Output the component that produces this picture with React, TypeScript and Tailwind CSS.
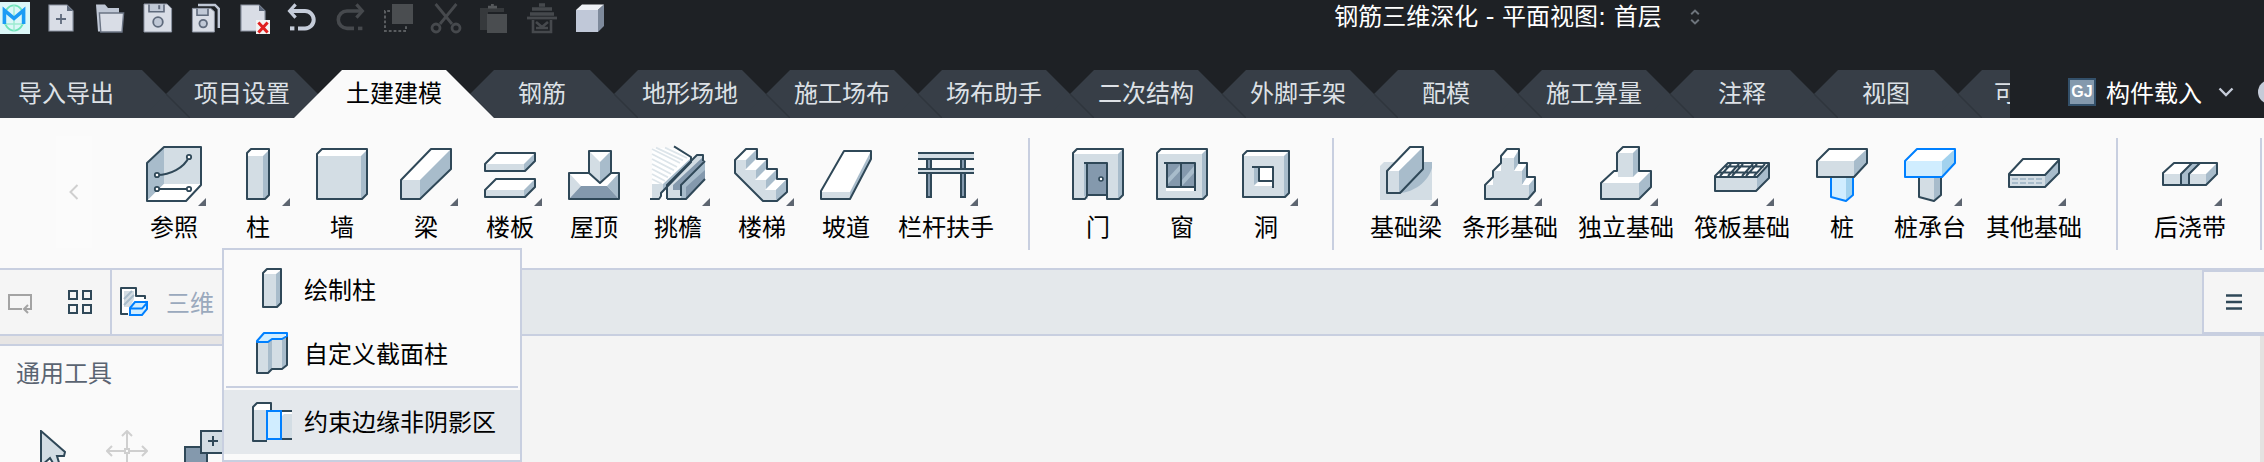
import type { ReactNode } from "react";

const DARK = "#2f4858";
const LIGHT = "#d3dde4";
const MID = "#a8bccb";
const DEEP = "#8499ad";
const BLUE = "#0080ff";
const SKY = "#d0edff";
const SKY_SIDE = "#a2d2ee";

type FaceProps = { d: string; fill: string };
const Face = ({ d, fill }: FaceProps) => <path d={d} fill={fill} />;

const Edge = ({ d, color = DARK }: { d: string; color?: string }) => (
  <path d={d} fill="none" stroke={color} strokeWidth="1" strokeLinejoin="round" />
);

/* ---------- Quick access icons (16 × 16 grid) ---------- */

const DocBase = () => (
  <>
    <path d="M1.5 1.5H10.5L13.5 4.5V14.5H1.5Z" fill="#d9dde6" stroke="#8b93a2" strokeWidth=".6" />
    <path d="M10.5 1.5L13.5 4.5H10.5Z" fill="#5f6a7c" />
  </>
);

const FloppyBase = () => (
  <>
    <path d="M1 1H12.5L14.8 3.2V15H1Z" fill="#d9dde6" stroke="#8b93a2" strokeWidth=".5" />
    <path d="M3.5 1.2V4.9H11V1.2" fill="#c0c8d6" stroke="#5f6a7c" strokeWidth=".8" />
    <path d="M8.6 1.6V3.6" stroke="#5f6a7c" />
    <circle cx="8" cy="10" r="2.4" fill="#c0c8d6" stroke="#5f6a7c" strokeWidth=".9" />
  </>
);

const quickIcons: { label: string; art: ReactNode }[] = [
  {
    label: "新建",
    art: (
      <>
        <DocBase />
        <path d="M7.5 6V11M5 8.5H10" stroke="#5f6a7c" strokeWidth=".9" fill="none" />
      </>
    ),
  },
  {
    label: "打开",
    art: (
      <>
        <path d="M1 1.2H5.5L7 3H12.5V5.5H3.5L3 14.8H2Z" fill="#bfc7d5" />
        <path d="M2.7 5.5H14.8L14 15H3.4Z" fill="#d9dde6" stroke="#6b7484" strokeWidth=".7" />
      </>
    ),
  },
  { label: "保存", art: <FloppyBase /> },
  {
    label: "全部保存",
    art: (
      <>
        <path d="M4 1.5H12.5L14.4 3.4V13" fill="none" stroke="#bfc7d5" strokeWidth="1.2" />
        <path d="M1.2 3.2H10.4L12.2 4.8V15H1.2Z" fill="#d9dde6" stroke="#8b93a2" strokeWidth=".5" />
        <path d="M3.5 3.4V6.6H9V3.4" fill="#c0c8d6" stroke="#5f6a7c" strokeWidth=".8" />
        <circle cx="6.6" cy="10.8" r="1.9" fill="#c0c8d6" stroke="#5f6a7c" strokeWidth=".9" />
      </>
    ),
  },
  {
    label: "关闭文档",
    art: (
      <>
        <DocBase />
        <rect x="9" y="9" width="7" height="7" fill="#f3f3f3" />
        <path d="M10.2 10.2L14.8 15.2M14.8 10.2L10.2 15.2" stroke="#e02020" strokeWidth="1.5" />
      </>
    ),
  },
  {
    label: "撤销",
    art: (
      <>
        <path d="M2.5 4.5H9.5A4.3 4.3 0 0 1 9.5 13.2H6" fill="none" stroke="#c5ccd9" strokeWidth="2" />
        <path d="M4.8 1.2L1.8 4.5L4.8 7.8" fill="none" stroke="#c5ccd9" strokeWidth="1.6" />
        <path d="M2 13.2H4.2" stroke="#c5ccd9" strokeWidth="2" />
      </>
    ),
  },
  {
    label: "重做",
    art: (
      <>
        <path d="M13.5 4.5H6.5A4.3 4.3 0 0 0 6.5 13.2H10" fill="none" stroke="#46494d" strokeWidth="1.8" />
        <path d="M11.2 1.2L14.2 4.5L11.2 7.8" fill="none" stroke="#46494d" strokeWidth="1.6" />
        <path d="M12 13.2H14.2" stroke="#46494d" strokeWidth="1.8" />
      </>
    ),
  },
  {
    label: "选择",
    art: (
      <>
        <rect x="5" y="1" width="10.5" height="10" fill="#4a4d50" />
        <path d="M4 4.5H1.5V14.5H12V12" fill="none" stroke="#5a5d60" strokeDasharray="1.4 1" />
      </>
    ),
  },
  {
    label: "剪切",
    art: (
      <g fill="none" stroke="#46494d" strokeWidth="1.4">
        <path d="M2.8 1L11 11M13.2 1L5 11" />
        <circle cx="3" cy="13" r="2" />
        <circle cx="13" cy="13" r="2" />
      </g>
    ),
  },
  {
    label: "粘贴",
    art: (
      <>
        <path d="M1 3H13V5H5V14H1Z" fill="#36393c" />
        <path d="M5 2.6H9.5M7.2 1V3" stroke="#55585b" strokeWidth="1.4" />
        <rect x="4.5" y="6" width="10" height="9.5" fill="#4a4d50" />
      </>
    ),
  },
  {
    label: "匹配",
    art: (
      <g fill="none" stroke="#46494d">
        <path d="M3 3.5H13M2 6H14M6.5 1.5H9.5" strokeWidth="1.8" />
        <path d="M0.5 8H15.5" strokeWidth="1.4" />
        <path d="M3.5 9V15H12.5V9M5 10L8 12.5L11 10M5 13H11" strokeWidth="1.3" />
      </g>
    ),
  },
  {
    label: "三维",
    art: (
      <>
        <path d="M1 4L4 1.2H15L12 4Z" fill="#eef1f6" />
        <path d="M12 4L15 1.2V12L12 15Z" fill="#7e8a9c" />
        <path d="M1 4H12V15H1Z" fill="#c0c8d8" />
      </>
    ),
  },
];

/* ---------- Ribbon icons (32 × 32 grid) ---------- */

const refIcon = (
  <>
    <Face d="M2.5 10.5L11 2.5V21L2.5 29.5Z" fill={MID} />
    <Face d="M11 2.5H29.5V21H11Z" fill={LIGHT} />
    <Face d="M11 21H29.5L22 29.5H2.5Z" fill="#fff" />
    <Edge d="M2.5 10.5L11 2.5H29.5V21.5L22 29.5H2.5Z" />
    <Edge d="M7.5 16.5C14 16.5 21 13 23.5 7.5M7.5 23.5H23.5" />
    {[[7.5, 16.5], [23.5, 7.5], [7.5, 23.5], [23.5, 23.5]].map(([x, y]) => (
      <circle key={`${x}-${y}`} cx={x} cy={y} r="1.1" fill="#fff" stroke={DARK} strokeWidth=".9" />
    ))}
  </>
);

const columnIcon = (
  <>
    <Face d="M10.5 5.5L12.5 3.5H21.5L19 7H10.5Z" fill="#fff" />
    <Face d="M10.5 7H18.5V28.5H10.5Z" fill={LIGHT} />
    <Face d="M18.5 7L21.5 4V26.5L18.5 28.5Z" fill={MID} />
    <Edge d="M10.5 5.5L12.5 3.5H21.5V26.5L19.5 28.5H10.5Z" />
  </>
);

const wallIcon = (
  <>
    <Face d="M3.5 6L6 3.5H28.5L25.5 7H3.5Z" fill="#fff" />
    <Face d="M3.5 7H25.5V28.5H3.5Z" fill={LIGHT} />
    <Face d="M25.5 7L28.5 4V26L25.5 28.5Z" fill={MID} />
    <Edge d="M3.5 6L6 3.5H28.5V26L26 28.5H3.5Z" />
  </>
);

const beamIcon = (
  <>
    <Face d="M3.5 19L18.5 3.5H28.5L13 19Z" fill="#fff" />
    <Face d="M3.5 19H13V28.5H3.5Z" fill={LIGHT} />
    <Face d="M13 19L28.5 3.5V13.5L13 28.5Z" fill={MID} />
    <Edge d="M3.5 19L18.5 3.5H28.5V13.5L13 28.5H3.5Z" />
  </>
);

const Slab = () => (
  <>
    <Face d="M3.5 11L9 5.5H28.5L23 11Z" fill="#fff" />
    <Face d="M3.5 11H23V14.5H3.5Z" fill={LIGHT} />
    <Face d="M23 11L28.5 5.5V9.5L23 14.5Z" fill={MID} />
    <Edge d="M3.5 11L9 5.5H28.5V9.5L23.5 14.5H3.5Z" />
  </>
);

const slabIcon = (
  <>
    <Slab />
    <g transform="translate(0 13)">
      <Slab />
    </g>
  </>
);

const roofIcon = (
  <>
    <Face d="M3.5 15.5H28.5L23 22H9Z" fill="#fff" />
    <Face d="M3.5 15.5L9.5 22L3.5 28.5Z" fill={LIGHT} />
    <Face d="M28.5 15.5L22.5 22L28.5 28.5Z" fill={MID} />
    <Face d="M9.5 22H22.5L28.5 28.5H3.5Z" fill={DEEP} />
    <Face d="M13.5 4.5H24.5L19 10Z" fill="#fff" />
    <Face d="M13.5 4.5L19 10V20.5L13.5 15.5Z" fill={LIGHT} />
    <Face d="M24.5 4.5L19 10V20.5L24.5 15.5Z" fill={MID} />
    <Edge d="M13.5 15.5H3.5V28.5H28.5V15.5H24.5M13.5 4.5H24.5V15.5L19 20.5L13.5 15.5Z" />
  </>
);

const eavesIcon = (
  <>
    <Face d="M3 3H15L22.5 8V10L9 23V28H3Z" fill="#fff" />
    <path
      d="M3 3.5L17 10.5M3 6L15.5 12.5M3 8.5L14 14.2M3 11L12.5 16M3 13.5L11 17.7M3 16L9.5 19.5M3 18.5L8 21M5 2.8L18.5 9.2M9.5 2.8L20.5 8"
      stroke="#dde5ea"
      strokeWidth=".9"
      fill="none"
    />
    <Face d="M3 21H8.5V25L6 28H3Z" fill={LIGHT} />
    <Face d="M8.5 21L22.5 8V10.5L8.5 25Z" fill={MID} />
    <Face d="M10.5 21.5L25.5 7H28.5V11L17.5 22V28H10.5Z" fill={LIGHT} />
    <Face d="M13.5 21.5L28.5 7.5V10L17.5 21V24H13.5Z" fill={DEEP} />
    <Face d="M17.5 21.5L29.5 9.5V18.5L20 28H17.5Z" fill={MID} />
    <Face d="M20 22.5L29.5 14V18.5L20 28Z" fill={DEEP} />
    <Edge d="M14 2.2L22.5 7.5V10L7.5 25.5V27L6.5 28.5H2" />
    <Edge d="M10.5 28.5V21.5L25.5 6.5H28.5V9.5" />
    <Edge d="M29.5 9.5L17.5 21.5V27M10.5 28.5H20L29.5 18.5" />
  </>
);

const stairsIcon = (
  <>
    <Face d="M2.5 9H8L8 14H13V19H18V24H23.5V29.5H16.5L2.5 15.5Z" fill={LIGHT} />
    {[0, 5, 10, 15].map((k) => (
      <g key={k} transform={`translate(${k} ${k})`}>
        <Face d="M2.5 9L8 3.5H13.5L8 9Z" fill="#fff" />
        <Face d="M8 9L13.5 3.5V8.5L8 14Z" fill={MID} />
      </g>
    ))}
    <Face d="M23 24L28.5 18.5V25L23.5 29.5Z" fill={MID} />
    <Edge d="M2.5 9L8 3.5H13.5V8.5H18.5V13.5H23.5V18.5H28.5V25L23.5 29.5H16.5L2.5 15.5Z" />
  </>
);

const rampIcon = (
  <>
    <Face d="M3.5 25L15 4.5H28.5L18 25Z" fill="#fff" />
    <Face d="M3.5 25H18V28.5H3.5Z" fill={LIGHT} />
    <Face d="M18 25L28.5 4.5V8.5L18 28.5Z" fill={MID} />
    <Edge d="M3.5 24.5L15 4.5H28.5V8.5L18 28.5H3.5Z" />
  </>
);

const railingIcon = (
  <>
    <rect x="2" y="5" width="28" height="4" fill={LIGHT} />
    <rect x="6.5" y="8.5" width="2" height="19" fill={DEEP} stroke={DARK} />
    <rect x="23.5" y="8.5" width="2" height="19" fill={DEEP} stroke={DARK} />
    <rect x="2" y="13" width="28" height="3" fill={LIGHT} />
    <Edge d="M2 5.5H30M2 8.5H30M2 13.5H30M2 15.5H30" />
  </>
);

const doorIcon = (
  <>
    <Face d="M3.5 5.5L5.5 3.5H28.5L26 6H3.5Z" fill="#fff" />
    <Face d="M3.5 6H26V28.5H3.5Z" fill={LIGHT} />
    <Face d="M26 6L28.5 3.5V26.5L26 28.5Z" fill={MID} />
    <rect x="11" y="27" width="9" height="2.2" fill="#fafafa" />
    <rect x="9" y="11" width="1.5" height="16" fill={MID} />
    <rect x="10.5" y="10.5" width="10" height="16" fill={DEEP} />
    <Edge d="M9 10.5H20.5V28.5H26.5L28.5 26.5V3.5H5.5L3.5 5.5V28.5H9.5L10.5 27V10.5M10.5 26.5H20.5" />
    <circle cx="17.5" cy="18.5" r="1" fill="#fff" stroke={DARK} strokeWidth=".8" />
  </>
);

const windowIcon = (
  <>
    <Face d="M3.5 5.5L5.5 3.5H28.5L26 6H3.5Z" fill="#fff" />
    <Face d="M3.5 6H26V28.5H3.5Z" fill={LIGHT} />
    <Face d="M26 6L28.5 3.5V26.5L26 28.5Z" fill={MID} />
    <Edge d="M3.5 5.5L5.5 3.5H28.5V26.5L26.5 28.5H3.5Z" />
    <rect x="8" y="23" width="15" height="1.5" fill="#fff" />
    <rect x="8.5" y="10.5" width="14" height="12" fill={DEEP} />
    <Face d="M9 18L15 11.5V14.5L9 21Z" fill={MID} />
    <Face d="M16 19L22 12V15.5L16 22Z" fill={MID} />
    <Edge d="M7 10.5H22.5V24.5M8.5 10.5V22.5H22.5M15.5 10.5V22.5" />
  </>
);

const holeIcon = (
  <>
    <Face d="M4.5 6.5L6.5 4.5H27.5L25 7H4.5Z" fill="#fff" />
    <Face d="M4.5 7H25V27.5H4.5Z" fill={LIGHT} />
    <Face d="M25 7L27.5 4.5V25.5L25 27.5Z" fill={MID} />
    <Edge d="M4.5 6.5L6.5 4.5H27.5V25.5L25.5 27.5H4.5Z" />
    <Face d="M10 12.5H12.5V19.5L10 21.5Z" fill={MID} />
    <Face d="M12.5 12.5H19.5V22H10L12.5 19.5Z" fill="#fff" />
    <Edge d="M9 12.5H19.5V23M12.5 12.5V19.5H19.5" />
  </>
);

const foundationBeamIcon = (
  <>
    <Face d="M3 12L5 10H29V29H3Z" fill={LIGHT} />
    <Face d="M24 10H29V13C27 20 20 25 13 25.5Z" fill={MID} />
    <Face d="M6.5 14.5L18 2.5H24.5L12.5 14.5Z" fill="#fff" />
    <Face d="M6.5 14.5H12.5V25.5H6.5Z" fill={LIGHT} />
    <Face d="M12.5 14.5L24.5 2.5V13.5L12.5 25.5Z" fill={MID} />
    <Edge d="M6.5 14.5L18 2.5H24.5V13.5L13 25.5H6.5Z" />
  </>
);

const stripIcon = (
  <>
    <Face
      d="M3.5 28.5V21.5L7.5 17.5V14.5L11.5 10.5V7L14.5 3.5H20.5V10.5H24.5V17.5H28.5V24.5L25 28.5Z"
      fill={LIGHT}
    />
    <Face d="M11.5 8L14.5 3.5H20.5L18 8Z" fill="#fff" />
    <Face d="M18 8L20.5 4V11L18 14.5Z" fill={MID} />
    <Face d="M7.5 14.5L11.5 10.5V14.5Z" fill="#fff" />
    <Face d="M18 14.5L20.5 10.5H24.5L22 14.5Z" fill="#fff" />
    <Face d="M22 14.5L24.5 11V18L22 21.5Z" fill={MID} />
    <Face d="M3.5 21.5L7.5 17.5V21.5Z" fill="#fff" />
    <Face d="M22 21.5L24.5 17.5H28.5L25.5 21.5Z" fill="#fff" />
    <Face d="M25.5 21.5L28.5 18V24.5L25.5 28.5Z" fill={MID} />
    <Edge d="M3.5 28.5V21.5L7.5 17.5V14.5L11.5 10.5V7L14.5 3.5H20.5V10.5H24.5V17.5H28.5V24.5L25 28.5Z" />
  </>
);

const isolatedIcon = (
  <>
    <Face d="M3.5 20.5L10 14.5H28.5L22.5 20.5Z" fill="#fff" />
    <Face d="M3.5 20.5H22.5V28.5H3.5Z" fill={LIGHT} />
    <Face d="M22.5 20.5L28.5 14.5V22.5L22.5 28.5Z" fill={MID} />
    <Face d="M11.5 5.5L14.5 2.5H22.5L19.5 5.5Z" fill="#fff" />
    <Face d="M11.5 5.5H19.5V17.5H12Z" fill={LIGHT} />
    <Face d="M19.5 5.5L22.5 2.5V14.5L19.5 17.5Z" fill={MID} />
    <Edge d="M3.5 20.5L10 14.5H11.5V5.5L14.5 2.5H22.5V14.5H28.5V22.5L22.5 28.5H3.5Z" />
  </>
);

const raftIcon = (
  <>
    <Face d="M2.5 17L9 10.5H29.5L23 17Z" fill="#fff" />
    <Face d="M2.5 17H23.5V24.5H2.5Z" fill={LIGHT} />
    <Face d="M23.5 17L29.5 11V18L23.5 24.5Z" fill={MID} />
    <Edge d="M2.5 17L9 10.5H29.5V18L23 24.5H2.5ZM2.5 17.5H23.5L29.5 11" />
    <Edge d="M7.5 12.3H27M4.5 15.3H24M9 17L14.5 11M11 17L16.5 11M16 17L21.5 11M18 17L23.5 11M5 17L10.5 11M22 17L27.5 11" />
  </>
);

const PileCap = ({ blue }: { blue: boolean }) => (
  <>
    <Face d="M3.5 9.5L9.5 3.5H28.5L22 9.5Z" fill="#fff" />
    <Face d="M3.5 9.5H22V17.5H3.5Z" fill={blue ? SKY : LIGHT} />
    <Face d="M22 9.5L28.5 3.5V10.5L22 17.5Z" fill={blue ? SKY_SIDE : MID} />
    <Edge d="M3.5 9.5L9.5 3.5H28.5V10.5L22 17.5H3.5Z" color={blue ? BLUE : DARK} />
  </>
);

const PileShaft = ({ blue }: { blue: boolean }) => (
  <>
    <Face d="M10.5 17.5H18V29.5L10.5 27.5Z" fill={blue ? SKY : LIGHT} />
    <Face d="M18 17.5H21.5V26.5L18 29.5Z" fill={blue ? SKY_SIDE : MID} />
    <Edge d="M10.5 17.5V27.5L18 29.5L21.5 26.5V17.5" color={blue ? BLUE : DARK} />
  </>
);

const pileIcon = (
  <>
    <PileShaft blue />
    <PileCap blue={false} />
  </>
);

const pileCapIcon = (
  <>
    <PileShaft blue={false} />
    <PileCap blue />
  </>
);

const otherIcon = (
  <>
    <Face d="M3.5 16.5L10.5 8.5H28.5L21.5 16.5Z" fill="#fff" />
    <Face d="M3.5 16.5H21.5V22.5H3.5Z" fill={LIGHT} />
    <Face d="M21.5 16.5L28.5 8.5V15.5L21.5 22.5Z" fill={MID} />
    <path d="M5 18.5H20M5 20.5H20" stroke={MID} strokeDasharray="3 1" fill="none" />
    <Edge d="M3.5 16L10.5 8.5H28.5V15.5L21.5 22.5H3.5ZM3.5 16.5H21.5L28.5 9" />
  </>
);

const postCastIcon = (
  <>
    <Face d="M2.5 16L8 10.5H29.5L24 16Z" fill="#fff" />
    <Face d="M2.5 16H24V21.5H2.5Z" fill={LIGHT} />
    <Face d="M24 16L29.5 10.5V16L24 21.5Z" fill={MID} />
    <Face d="M11.5 16L17 10.5H21L15.5 16V21.5H11.5Z" fill={MID} />
    <Edge d="M2.5 15.5L8 10.5H29.5V16L24 21.5H2.5Z" />
    <Edge d="M17 10.5L11.5 16V21.5M21 10.5L15.5 16V21.5" />
  </>
);

/* ---------- Drop-down menu icons (24 × 24 grid) ---------- */

const menuColumn = (
  <>
    <Face d="M7.5 3L9.5 1.5H16.5L14 4H7.5Z" fill="#fff" />
    <Face d="M7.5 4H14V20.5H7.5Z" fill={LIGHT} />
    <Face d="M14 4L16.5 2V18.5L14 20.5Z" fill={MID} />
    <Edge d="M7.5 3.5L9.5 1.5H16.5V18.5L14.5 20.5H7.5Z" />
  </>
);

const menuCustom = (
  <>
    <Face d="M4.5 6H10.5L12 4.5H19.5V18L17 19.5H12L10 21.5H4.5Z" fill={LIGHT} />
    <Face d="M10 6L12 4.5V19.5L10 21.5Z" fill={MID} />
    <Face d="M17 4.5L19.5 3V18L17 19.5Z" fill={MID} />
    <Edge d="M4.5 6V21.5H10L12 19.5H17L19.5 17.5V2" />
    <Face d="M4.5 5.5L8 1.5H19.5L17 4.5H12L10 6.5H4.5Z" fill={SKY} />
    <Edge d="M4.5 5.5L8 1.5H19.5V3L17 4.5H12L10 6H4.5Z" color={BLUE} />
  </>
);

const menuEdge = (
  <>
    <Face d="M2.5 4.5L4.5 2.5H11.5V6H2.5Z" fill="#fff" />
    <Face d="M2.5 6H9.5V21.5H2.5Z" fill={LIGHT} />
    <Edge d="M11.5 6V2.5H4.5L2.5 4.5V21.5H9.5" />
    <Face d="M16.5 6.5H22V20.5H16.5Z" fill={LIGHT} />
    <Face d="M16.5 6.5H22V8H18L16.5 9.5Z" fill="#fff" />
    <Edge d="M16.5 6.5H22M16.5 20.5H22" />
    <path d="M9.5 6.5H16.5V20.5H9.5Z" fill={SKY} stroke={BLUE} />
  </>
);

/* ---------- Data ---------- */

const tabs = ["项目设置", "土建建模", "钢筋", "地形场地", "施工场布", "场布助手", "二次结构", "外脚手架", "配模", "施工算量", "注释", "视图"];
const activeTab = "土建建模";

type Tool = { label: string; art: ReactNode; more?: boolean };

const toolGroups: Tool[][] = [
  [
    { label: "参照", art: refIcon, more: true },
    { label: "柱", art: columnIcon, more: true },
    { label: "墙", art: wallIcon },
    { label: "梁", art: beamIcon, more: true },
    { label: "楼板", art: slabIcon, more: true },
    { label: "屋顶", art: roofIcon },
    { label: "挑檐", art: eavesIcon, more: true },
    { label: "楼梯", art: stairsIcon, more: true },
    { label: "坡道", art: rampIcon },
    { label: "栏杆扶手", art: railingIcon, more: true },
  ],
  [
    { label: "门", art: doorIcon },
    { label: "窗", art: windowIcon },
    { label: "洞", art: holeIcon, more: true },
  ],
  [
    { label: "基础梁", art: foundationBeamIcon, more: true },
    { label: "条形基础", art: stripIcon, more: true },
    { label: "独立基础", art: isolatedIcon, more: true },
    { label: "筏板基础", art: raftIcon, more: true },
    { label: "桩", art: pileIcon },
    { label: "桩承台", art: pileCapIcon, more: true },
    { label: "其他基础", art: otherIcon, more: true },
  ],
  [{ label: "后浇带", art: postCastIcon, more: true }],
];

/* ---------- Pieces ---------- */

function TitleBar() {
  return (
    <header className="flex h-[70px] items-start">
      <div className="flex shrink-0 items-center gap-4 pt-0.5">
        <svg viewBox="1 0 15 16" className="h-8 w-[30px]" aria-label="logo">
          <rect width="16" height="16" fill="#dcf7f8" />
          <ellipse cx="8" cy="8" rx="5" ry="6.3" fill="none" stroke="#6fe3b8" strokeWidth=".9" />
          <path d="M8 1.5V14.5M3 11L13 11" stroke="#9cecd0" strokeWidth=".7" />
          <path d="M3.2 11V4.2L8 8.2L12.8 4.2V11" fill="none" stroke="#1b9cf5" strokeWidth="1.8" />
        </svg>
        {quickIcons.map((icon) => (
          <button key={icon.label} type="button" aria-label={icon.label} className="size-8">
            <svg viewBox="0 0 16 16" className="size-8">
              {icon.art}
            </svg>
          </button>
        ))}
      </div>
      <div className="flex flex-1 items-center justify-center gap-7 pl-[164px]">
        <h1 className="font-['DejaVu_Sans','Noto_Sans_CJK_SC',sans-serif] text-2xl leading-[34px] whitespace-nowrap text-white">
          钢筋三维深化 - 平面视图: 首层
        </h1>
        <svg viewBox="0 0 5 8" className="h-4 w-2.5" fill="none" stroke="#6d747c">
          <path d="M.6 2.6L2.5 .8L4.4 2.6M.6 5.4L2.5 7.2L4.4 5.4" />
        </svg>
      </div>
    </header>
  );
}

function TabSeam() {
  return (
    <svg viewBox="0 0 24 24" className="absolute bottom-0 left-6 size-6">
      <path d="M0 0L24 24" stroke="#2f353d" strokeWidth="1.4" />
    </svg>
  );
}

function TabBar() {
  const idle = "bg-[#373e47] text-[#dde1e6]";
  return (
    <div className="flex h-12">
      <nav className="flex min-w-0 flex-1 overflow-hidden text-2xl leading-[44px] whitespace-nowrap">
        <button
          type="button"
          className={`w-[190px] shrink-0 pb-1 pl-[18px] text-left [clip-path:polygon(0_0,calc(100%-48px)_0,100%_100%,0_100%)] ${idle}`}
        >
          导入导出
        </button>
        {tabs.map((tab) => (
          <button
            key={tab}
            type="button"
            className={`relative -ml-12 min-w-48 shrink-0 px-[52px] pb-1 [clip-path:polygon(48px_0,calc(100%-48px)_0,100%_100%,0_100%)] ${
              tab === activeTab ? "z-10 bg-[#fafafa] text-black" : idle
            }`}
          >
            {tab !== activeTab && <TabSeam />}
            {tab}
          </button>
        ))}
        <button
          type="button"
          className={`relative -ml-12 w-48 shrink-0 pb-1 pl-[60px] text-left [clip-path:polygon(48px_0,calc(100%-48px)_0,100%_100%,0_100%)] ${idle}`}
        >
          <TabSeam />
          可
        </button>
      </nav>
      <div className="flex w-[254px] shrink-0 items-center overflow-hidden pb-1 pl-[58px] text-white">
        <button type="button" className="flex shrink-0 items-center gap-2.5 text-2xl leading-[44px]">
          <span className="flex size-7 items-center justify-center border-2 border-[#33506a] bg-[#8499ad] font-['Liberation_Sans',sans-serif] text-base leading-none font-bold">
            GJ
          </span>
          构件载入
        </button>
        <svg viewBox="0 0 16 10" className="ml-4 h-2.5 w-4 shrink-0" fill="none" stroke="#c5cbd8" strokeWidth="2.4">
          <path d="M1.5 1.5L8 8L14.5 1.5" />
        </svg>
        <span className="ml-6 size-6 shrink-0 rounded-full bg-[#c5cbd8]" />
      </div>
    </div>
  );
}

function MenuItem({ label, art, highlighted }: { label: string; art: ReactNode; highlighted?: boolean }) {
  return (
    <button
      type="button"
      role="menuitem"
      className={`flex h-16 w-full items-center gap-2 pl-6 text-2xl whitespace-nowrap text-black ${
        highlighted ? "bg-[#e4e8ec]" : ""
      }`}
    >
      <svg viewBox="0 0 24 24" className="size-12 shrink-0">
        {art}
      </svg>
      <span className="pb-0.5">{label}</span>
    </button>
  );
}

function ColumnMenu() {
  return (
    <div
      role="menu"
      className="absolute top-[112px] left-1.5 z-20 w-[300px] border-2 border-[#c8cfe0] bg-[#fafafa] pt-2 pb-1.5"
    >
      <MenuItem label="绘制柱" art={menuColumn} />
      <MenuItem label="自定义截面柱" art={menuCustom} />
      <hr className="mx-0.5 mb-0.5 border-t-2 border-[#c8cfe0]" />
      <MenuItem label="约束边缘非阴影区" art={menuEdge} highlighted />
    </div>
  );
}

function ToolButton({ label, art, more }: Tool) {
  return (
    <div className="relative shrink-0 pt-1.5">
      <button type="button" className="flex min-w-[84px] flex-col items-center px-2.5 text-black">
        <svg viewBox="0 0 32 32" className="size-16">
          {art}
          {more && <path d="M32 28V32H28Z" fill="#5d6570" />}
        </svg>
        <span className="pt-1 text-2xl leading-8 whitespace-nowrap">{label}</span>
      </button>
      {label === "柱" && <ColumnMenu />}
    </div>
  );
}

function Ribbon() {
  return (
    <section className="flex h-[152px] items-start border-b-2 border-[#c8cfe0] bg-[#fafafa] pt-[18px]">
      <button type="button" aria-label="向左滚动" className="mr-10 ml-14 flex h-28 w-9 shrink-0 items-center justify-center bg-[#fbfbfb]">
        <svg viewBox="0 0 10 16" className="h-4 w-2.5" fill="none" stroke="#cfcfcf" strokeWidth="2">
          <path d="M8.5 1L1.5 8L8.5 15" />
        </svg>
      </button>
      {toolGroups.map((group) => (
        <div key={group[0].label} className="flex shrink-0">
          {group.map((tool) => (
            <ToolButton key={tool.label} {...tool} />
          ))}
          <div className="mt-0.5 mr-[26px] ml-6 h-28 w-0.5 bg-[#c8cfe0]" />
        </div>
      ))}
    </section>
  );
}

function ViewBar() {
  return (
    <div className="flex h-[66px] border-b-2 border-[#c8cfe0] bg-[#e4e8eb]">
      <div className="flex w-28 items-center border-r-2 border-[#c8cfe0] bg-[#f5f5f5] pl-2">
        <button type="button" aria-label="返回" className="mr-9">
          <svg viewBox="0 0 12 12" className="size-6" fill="none" stroke="#a3a3a3">
            <path d="M7 9.5H.5V2.5H11.5V9.5H8.5M10 7.5L8 9.5L10 11.5" />
          </svg>
        </button>
        <button type="button" aria-label="平铺">
          <svg viewBox="0 0 12 12" className="size-6" fill="none" stroke={DARK}>
            <path d="M.5 .5H4.5V4.5H.5ZM7.5 .5H11.5V4.5H7.5ZM.5 7.5H4.5V11.5H.5ZM7.5 7.5H11.5V11.5H7.5Z" />
          </svg>
        </button>
      </div>
      <button type="button" className="flex w-60 items-center gap-4 bg-[#f5f5f5] pl-2 text-2xl text-[#9aa9bd]">
        <svg viewBox="0 0 15 15" className="size-[30px]">
          <path d="M.5 .5H8.5V4.5H12.5V13.5H.5Z" fill="#fff" />
          <path d="M2 2H7V6L5 10H2Z" fill={LIGHT} />
          <path d="M2 6L6 2M2 9L7 4" stroke={MID} />
          <Edge d="M4 13.5H.5V.5H8V4.5H12.5V6" />
          <path d="M5 10.5L7.5 7.5H13.5V11L11 14H5Z" fill={SKY} stroke={BLUE} />
          <path d="M5 10.8H11L13.5 8" fill="none" stroke={BLUE} />
        </svg>
        三维
      </button>
      <button
        type="button"
        aria-label="列表"
        className="ml-auto flex w-[62px] items-center border-y-2 border-l-2 border-[#c8cfe0] bg-[#f5f5f5] pl-[22px]"
      >
        <svg viewBox="0 0 16 16" className="size-4" stroke={DARK} strokeWidth="2.4">
          <path d="M0 1.5H16M0 8H16M0 14.5H16" />
        </svg>
      </button>
    </div>
  );
}

function Workspace() {
  return (
    <main className="flex min-h-32 flex-1 bg-[#f4f4f4]">
      <aside className="w-60 shrink-0 border-t-8 border-[#e7e5e4]">
        <div className="h-full border-t-2 border-[#c8cfe0] bg-[#fafafa]">
          <h2 className="pt-2 pl-4 text-2xl leading-9 text-[#5a6472]">通用工具</h2>
          <div className="flex h-[72px] items-start gap-10 overflow-hidden pt-10 pl-10">
            <button type="button" aria-label="选择" className="w-[26px]">
              <svg viewBox="0 0 13 20" className="h-10 w-[26px]">
                <path d="M.5 .5V18L5 14L8 19L10 18L8.5 13H12L12.5 11Z" fill={LIGHT} stroke={DARK} />
              </svg>
            </button>
            <button type="button" aria-label="移动" className="w-[42px]">
              <svg viewBox="0 0 21 21" className="size-[42px]" fill="none" stroke="#cfcfcf">
                <path d="M10.5 .5V20.5M.5 10.5H20.5M8 3L10.5 .5L13 3M8 18L10.5 20.5L13 18M3 8L.5 10.5L3 13M18 8L20.5 10.5L18 13" />
                <rect x="9.5" y="9.5" width="2" height="2" fill="#fafafa" />
              </svg>
            </button>
            <button type="button" aria-label="复制" className="-ml-1 w-12">
              <svg viewBox="0 0 24 20" className="h-10 w-12">
                <rect x=".5" y="8.5" width="11" height="11" fill={DEEP} stroke={DARK} />
                <rect x="8.5" y=".5" width="12" height="11" fill={LIGHT} stroke={DARK} />
                <path d="M14.5 3V8M12 5.5H17" stroke={DARK} />
              </svg>
            </button>
          </div>
        </div>
      </aside>
      <div className="ml-auto w-1 bg-[#e4e2e1]" />
    </main>
  );
}

export default function App() {
  return (
    <div className="flex min-h-screen flex-col overflow-hidden bg-[#1e2125] font-['Noto_Sans_CJK_SC',sans-serif]">
      <TitleBar />
      <TabBar />
      <Ribbon />
      <ViewBar />
      <Workspace />
    </div>
  );
}
